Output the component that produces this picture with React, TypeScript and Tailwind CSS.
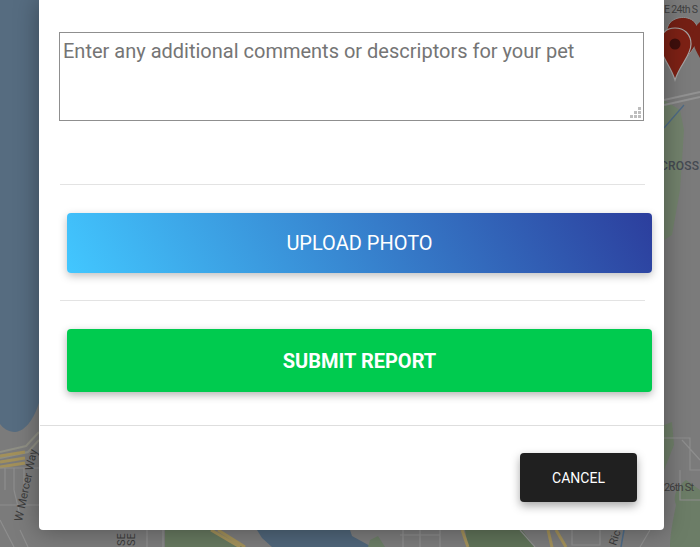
const roadFont = { fontFamily: "Roboto, sans-serif" }

function MapBackdrop() {
  return (
    <svg className="absolute inset-0" width="700" height="547" viewBox="0 0 700 547">
      <rect width="700" height="547" fill="#7b7b7b" />
      {/* water */}
      <path d="M0 0H39V403C34 418 26 431 15 432C8 432 3 428 0 424Z" fill="#566c80" />
      <path d="M257 530H350L352 536L372 547H272L262 538Z" fill="#4f6579" />
      {/* parks */}
      <path d="M165 530H212L243 547H165Z" fill="#66785f" />
      <path d="M370 540L378 536L385 547H368Z" fill="#6b7d66" />
      <path d="M465 530H522L535 547H468Z" fill="#5f7258" />
      <path d="M664 100L680 110L684 130L680 190L672 235L664 240Z" fill="#72826c" />
      <path d="M664 425L672 422L674 445L664 470Z" fill="#6f7f69" />
      <path d="M686 480C678 486 672 495 676 505C673 520 670 535 670 547H700V490Z" fill="#6c7d67" />
      {/* highways */}
      <path d="M0 452L26 446L39 432M0 458L28 452L39 440" stroke="#8f8f84" strokeWidth="2" fill="none" />
      <path d="M0 456L25 452M0 462L25 458M0 467L25 463" stroke="#a2905a" strokeWidth="3" fill="none" />
      <path d="M211 530L240 547M218 530L245 547M548 530L552 547M556 530L566 547M462 530L468 547" stroke="#a2905a" strokeWidth="3" fill="none" />
      <path d="M664 100L700 92M664 105L700 97" stroke="#929292" strokeWidth="2" fill="none" />
      {/* local streets */}
      <path d="M5 468V490M14 468V490M24 468V490M0 468H39M0 505H39M14 490L20 515M0 520L14 547M20 530L28 547M664 438H690V470H700M682 440L700 460M680 470V500H700M147 530V547M163 530V547M403 530V547M420 530V547M440 530V547M400 535H440M572 530V545H600V530M520 530L535 547M650 530L640 547" stroke="#8e8e8e" strokeWidth="1.2" fill="none" />
      <path d="M664 128L671 120L684 105" stroke="#4d6a86" strokeWidth="1.2" fill="none" />
      <path d="M624 530L621 547" stroke="#4d6a86" strokeWidth="1.5" fill="none" />
      {/* labels */}
      <g fill="#3b3b3b" style={roadFont}>
        <text x="664" y="13" fontSize="10.5" textLength="34" fill="#3f3f3f">E 24th S</text>
        <text x="660" y="170" fontSize="12" textLength="39" fill="#454a52" fontWeight="500">CROSS</text>
        <text x="664" y="491" fontSize="11" textLength="30" fill="#404040">26th St</text>
        <text transform="translate(22 522) rotate(-78)" fontSize="11.5">W Mercer Way</text>
        <text transform="translate(125 546) rotate(-90)" fontSize="11">SE</text>
        <text transform="translate(135 546) rotate(-90)" fontSize="11">SE</text>
        <text transform="translate(616 546) rotate(-72)" fontSize="11">Ric</text>
      </g>
      {/* marker pins */}
      <path d="M682 62C668 44 664 36 668 26C672 16 690 14 696 24C704 36 694 50 682 62Z" fill="#741f14" stroke="#8e8e8e" />
      <path d="M700 58C694 48 690 38 694 30C697 24 700 22 700 22Z" fill="#741f14" />
      <path d="M675 80C670 64 660 56 660 44C660 34 666 28 675 28C684 28 691 34 691 44C691 56 680 64 675 80Z" fill="#7d2115" stroke="#a5a5a5" strokeWidth="1.2" />
      <circle cx="675" cy="44" r="5.5" fill="#3f0f0c" />
    </svg>
  )
}

// six dot grip in the textarea corner
function ResizeGrip() {
  return (
    <svg className="absolute right-[3px] bottom-[3px]" width="11" height="11" viewBox="0 0 11 11" fill="#bdbdbd">
      <rect x="8" y="0" width="3" height="3" />
      <rect x="4" y="4" width="3" height="3" />
      <rect x="8" y="4" width="3" height="3" />
      <rect x="0" y="8" width="3" height="3" />
      <rect x="4" y="8" width="3" height="3" />
      <rect x="8" y="8" width="3" height="3" />
    </svg>
  )
}

export default function App() {
  return (
    <div className="relative h-[547px] w-[700px] overflow-hidden font-['Roboto',sans-serif]">
      <MapBackdrop />
      <div className="absolute inset-0 pl-[39px]">
        <div className="flex h-[530px] w-[625px] flex-col rounded-b-sm bg-white shadow-[0_0_24px_rgba(0,0,0,0.35)]">
          <div className="px-5 pt-8">
            <div className="relative w-[585px]">
              <textarea
                readOnly
                placeholder="Enter any additional comments or descriptors for your pet"
                className="block h-[89px] w-full resize-none border border-[#8f8f8f] pt-1.5 pr-1 pb-1 pl-[3px] text-xl leading-6 outline-none placeholder:text-[#757575]"
              />
              <ResizeGrip />
            </div>
          </div>
          <hr className="mt-[63px] ml-[21px] w-[585px] border-[#e3e3e3]" />
          <div className="px-7 pt-7">
            <button className="h-[60px] w-[585px] rounded bg-[linear-gradient(60deg,#42c7ff,#2c3e9d)] text-xl text-white shadow-[0_3px_8px_rgba(0,0,0,0.25)]">
              UPLOAD PHOTO
            </button>
          </div>
          <hr className="mt-[27px] ml-[21px] w-[585px] border-[#e3e3e3]" />
          <div className="px-7 pt-7">
            <button className="h-[63px] w-[585px] rounded-sm bg-[#00cb4f] text-xl font-bold text-white shadow-[0_3px_8px_rgba(0,0,0,0.3)]">
              SUBMIT REPORT
            </button>
          </div>
          <hr className="mt-[33px] ml-px border-[#dedede]" />
          <div className="flex justify-end pt-[27px] pr-[27px]">
            <button className="h-[49px] w-[117px] rounded bg-[#202020] text-sm text-white shadow-[0_4px_10px_rgba(0,0,0,0.35)]">
              CANCEL
            </button>
          </div>
        </div>
      </div>
    </div>
  )
}
